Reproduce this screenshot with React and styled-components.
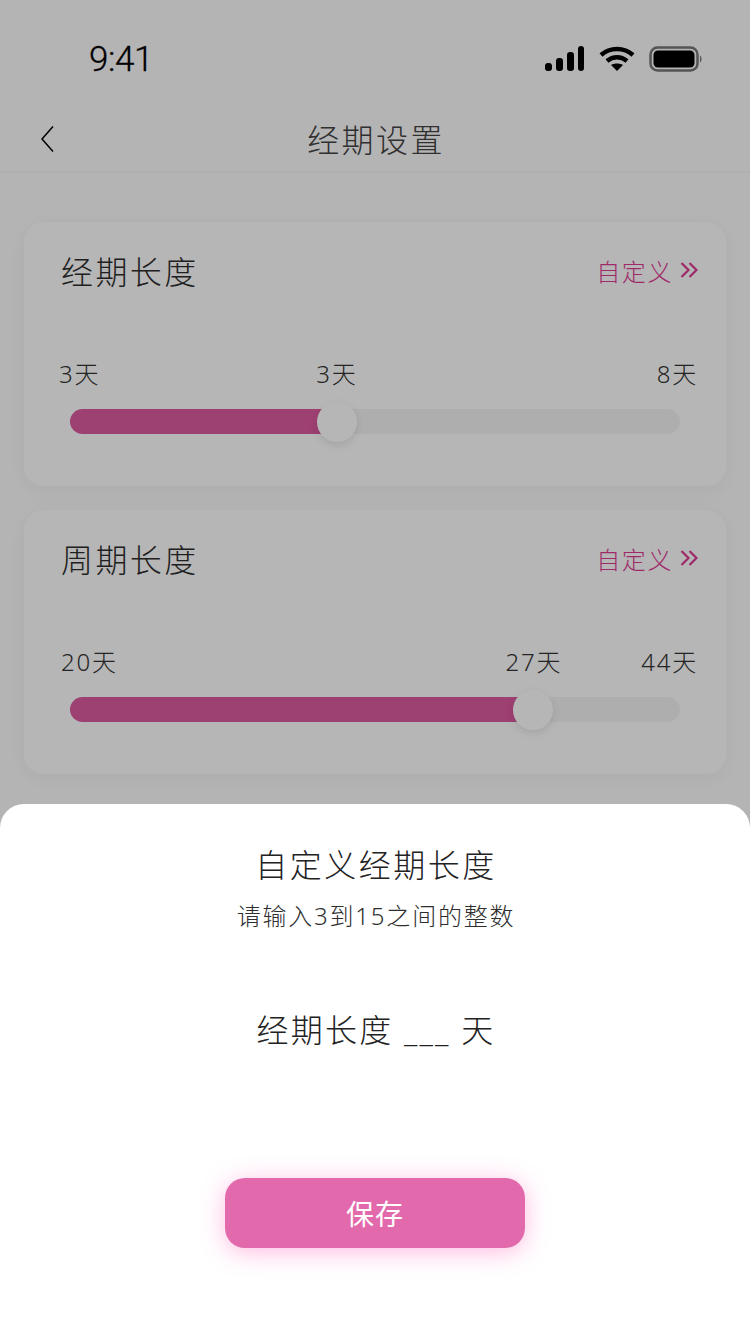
import React from 'react'
import styled, { createGlobalStyle } from 'styled-components'

const GlobalStyle = createGlobalStyle`
    html, body { margin: 0; padding: 0; background: #fff; }
    * { box-sizing: border-box; }
    body { font-family: "Noto Sans", "Noto Sans CJK SC", sans-serif; font-weight: 300; }
`

const Page = styled.div`
    position: relative;
    width: 750px;
    height: 1334px;
    overflow: hidden;
    background: #fdfdfd;
    color: #555;
`

const StatusBar = styled.div`
    height: 88px;
    padding: 30px 47px 0 89px;
    display: flex;
    align-items: center;
    justify-content: space-between;
    color: #000;
`

const Clock = styled.span`
    font-family: "Roboto", sans-serif;
    font-weight: 300;
    font-size: 35px;
    letter-spacing: -0.4px;
    -webkit-text-stroke: 0.3px #000;
`

const StatusIcons = styled.div`
    display: flex;
    align-items: center;
    gap: 14px;
`

const NavBar = styled.div`
    position: relative;
    height: 85px;
    padding: 16px 0 0 2px;
    display: flex;
    align-items: center;
    justify-content: center;
    border-bottom: 2px solid #f7f7f7;
`

const BackIcon = styled.svg`
    position: absolute;
    left: 38px;
    top: 37px;
`

const NavTitle = styled.h1`
    margin: 0;
    font-size: 32px;
    font-weight: 300;
    letter-spacing: 2.4px;
    color: #444;
`

const Cards = styled.div`
    padding: 49px 24px 0;
    display: flex;
    flex-direction: column;
    gap: 24px;
`

const Card = styled.section`
    position: relative;
    height: 264px;
    padding: 22px 28px 0 37px;
    background: #fff;
    border-radius: 20px;
    box-shadow: 0 4px 24px rgba(0, 0, 0, 0.05);
`

const CardHead = styled.div`
    display: flex;
    align-items: center;
    justify-content: space-between;
    height: 52px;
`

const CardTitle = styled.h2`
    margin: 0;
    font-size: 32px;
    font-weight: 300;
    letter-spacing: 2.4px;
    color: #2e2e2e;
`

const CustomLink = styled.a`
    display: flex;
    align-items: center;
    gap: 7px;
    font-size: 24px;
    letter-spacing: 1.6px;
    color: #de3c94;
`

const Labels = styled.div`
    position: relative;
    display: flex;
    justify-content: space-between;
    margin: 54px 0 0 ${p => p.$inset}px;
    height: 48px;
    font-size: 24px;
    line-height: 48px;
    letter-spacing: 1.8px;
    color: #333;
`

const ValueLabel = styled.span`
    position: absolute;
    top: 0;
    transform: translateX(-50%);
`

const Track = styled.div`
    position: relative;
    height: 25px;
    margin: 11px 18px 0 9px;
    background: #f4f4f4;
    border-radius: 13px;
`

const Fill = styled.div`
    height: 100%;
    background: #dd5aa0;
    border-radius: 13px 0 0 13px;
`

const Thumb = styled.div`
    position: absolute;
    top: -7px;
    width: 40px;
    height: 40px;
    transform: translateX(-50%);
    background: #fff;
    border-radius: 50%;
    box-shadow: 0 3px 8px rgba(0, 0, 0, 0.1);
`

const Overlay = styled.div`
    position: absolute;
    inset: 0;
    background: rgba(0, 0, 0, 0.285);
`

const Sheet = styled.div`
    position: absolute;
    left: 0;
    right: 0;
    bottom: 0;
    height: 530px;
    padding-top: 36px;
    display: flex;
    flex-direction: column;
    align-items: center;
    background: #fff;
    border-radius: 24px 24px 0 0;
`

const SheetTitle = styled.h3`
    margin: 0 0 0 2px;
    height: 50px;
    line-height: 50px;
    font-size: 32px;
    font-weight: 300;
    letter-spacing: 2.5px;
    color: #222;
`

const SheetHint = styled.p`
    margin: 2px 0 0 2px;
    height: 48px;
    line-height: 48px;
    font-size: 24px;
    letter-spacing: 1.8px;
    color: #2e2e2e;
`

const LengthLine = styled.div`
    margin: 65px 0 0 2px;
    height: 50px;
    line-height: 50px;
    font-size: 32px;
    letter-spacing: 2.2px;
    color: #222;
    white-space: pre;
`

const SaveButton = styled.button`
    margin-top: 123px;
    width: 300px;
    height: 70px;
    border: 0;
    border-radius: 20px;
    background: #e26aac;
    color: #fff;
    font-family: inherit;
    font-weight: 400;
    font-size: 28px;
    letter-spacing: 1px;
    box-shadow: 0 4px 24px rgba(255, 105, 190, 0.45);
`

const sliders = [
    { title: '经期长度', min: '3天', max: '8天', value: '3天', pos: 259, labelPos: 278, inset: 35 },
    { title: '周期长度', min: '20天', max: '44天', value: '27天', pos: 455, labelPos: 473, inset: 37 },
]

const SliderCard = ({ title, min, max, value, pos, labelPos, inset }) => (
    <Card>
        <CardHead>
            <CardTitle>{title}</CardTitle>
            <CustomLink>
                自定义
                <svg width="18" height="16" viewBox="0 0 18 16" fill="none" stroke="#de3c94" strokeWidth="2.2">
                    <path d="M1.500 1l7 7-7 7M9.500 1l7 7-7 7" />
                </svg>
            </CustomLink>
        </CardHead>
        <Labels $inset={inset - 37}>
            <span>{min}</span>
            <ValueLabel style={{ left: labelPos }}>{value}</ValueLabel>
            <span>{max}</span>
        </Labels>
        <Track>
            <Fill style={{ width: pos }} />
            <Thumb style={{ left: pos + 8 }} />
        </Track>
    </Card>
)

const App = () => (
    <>
        <GlobalStyle />
        <Page>
            <StatusBar>
                <Clock>9:41</Clock>
                <StatusIcons>
                    <svg width="40" height="26" viewBox="0 0 40 26" fill="#000">
                        <rect x="0" y="17" width="7" height="8" rx="3" />
                        <rect x="11" y="12" width="7" height="13" rx="3" />
                        <rect x="22" y="6" width="7" height="19" rx="3" />
                        <rect x="33" y="0" width="6" height="25" rx="3" />
                    </svg>
                    <svg width="36" height="26" viewBox="0 0 36 26" fill="none" stroke="#000" strokeWidth="4.400">
                        <path d="M2 9c9-8 23-8 32 0" />
                        <path d="M8 15c6-5 14-5 20 0" />
                        <path d="M18 25l-6-6c3.500-2 8.500-2 12 0z" fill="#000" stroke="none" />
                    </svg>
                    <svg width="54" height="26" viewBox="0 0 54 26" fill="none">
                        <rect x="1.500" y="1.500" width="47" height="23" rx="7" stroke="#777" strokeWidth="2.500" />
                        <rect x="4.500" y="4.500" width="41" height="17" rx="4.500" fill="#000" />
                        <path d="M51 9.500c2 1 2 6 0 7z" fill="#777" />
                    </svg>
                </StatusIcons>
            </StatusBar>
            <NavBar>
                <BackIcon width="18" height="28" viewBox="0 0 18 28" fill="none" stroke="#000" strokeWidth="1.500">
                    <path d="M15 1.500L4 14l11 12.500" />
                </BackIcon>
                <NavTitle>经期设置</NavTitle>
            </NavBar>
            <Cards>
                {sliders.map((s, key) => <SliderCard key={key} {...s} />)}
            </Cards>
            <Overlay />
            <Sheet>
                <SheetTitle>自定义经期长度</SheetTitle>
                <SheetHint>请输入3到15之间的整数</SheetHint>
                <LengthLine>经期长度 ___ 天</LengthLine>
                <SaveButton>保存</SaveButton>
            </Sheet>
        </Page>
    </>
)

export default App
